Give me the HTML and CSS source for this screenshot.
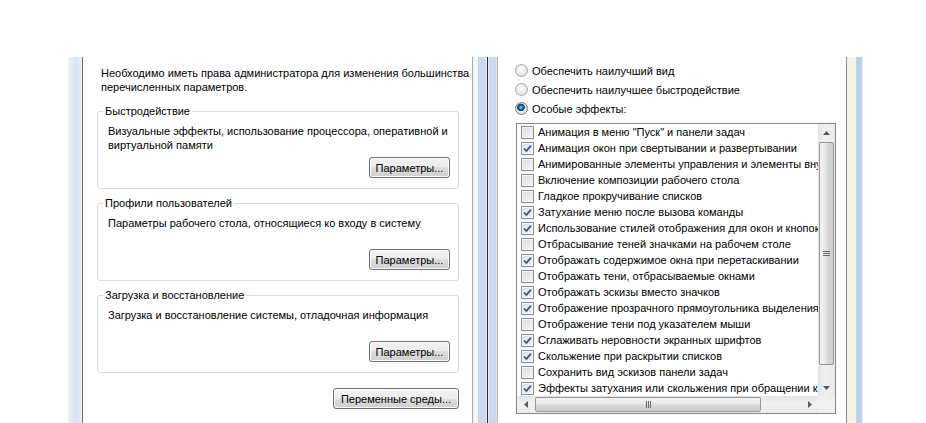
FILE: index.html
```html
<!DOCTYPE html>
<html lang="ru">
<head>
    <meta charset="UTF-8">
    <meta name="viewport" content="width=device-width, initial-scale=1.0">
    <title>Параметры быстродействия</title>
    <link rel="stylesheet" href="styles.css">
</head>
<body>
    <div class="desk">
        <div class="strip-l"></div>

        <section class="panel panel-l">
            <p class="intro">Необходимо иметь права администратора для изменения большинства<br>перечисленных параметров.</p>

            <fieldset class="group">
                <legend>Быстродействие</legend>
                <p class="group-text">Визуальные эффекты, использование процессора, оперативной и<br>виртуальной памяти</p>
                <div class="actions"><button class="btn">Параметры...</button></div>
            </fieldset>

            <fieldset class="group">
                <legend>Профили пользователей</legend>
                <p class="group-text">Параметры рабочего стола, относящиеся ко входу в систему</p>
                <div class="actions"><button class="btn">Параметры...</button></div>
            </fieldset>

            <fieldset class="group">
                <legend>Загрузка и восстановление</legend>
                <p class="group-text">Загрузка и восстановление системы, отладочная информация</p>
                <div class="actions"><button class="btn">Параметры...</button></div>
            </fieldset>

            <div class="actions env"><button class="btn btn-wide">Переменные среды...</button></div>
        </section>

        <div class="gutter"></div>

        <section class="panel panel-r">
            <div class="option"><span class="radio"></span>Обеспечить наилучший вид</div>
            <div class="option"><span class="radio"></span>Обеспечить наилучшее быстродействие</div>
            <div class="option"><span class="radio checked"></span>Особые эффекты:</div>

            <div class="list">
                <ul class="items">
                    <li><span class="cb"></span>Анимация в меню "Пуск" и панели задач</li>
                    <li><span class="cb on"><svg viewBox="0 0 11 11"><path d="M2 5.5 L4.4 8 L9 2.6"/></svg></span>Анимация окон при свертывании и развертывании</li>
                    <li><span class="cb"></span>Анимированные элементы управления и элементы внутри окна</li>
                    <li><span class="cb"></span>Включение композиции рабочего стола</li>
                    <li><span class="cb"></span>Гладкое прокручивание списков</li>
                    <li><span class="cb on"><svg viewBox="0 0 11 11"><path d="M2 5.5 L4.4 8 L9 2.6"/></svg></span>Затухание меню после вызова команды</li>
                    <li><span class="cb on"><svg viewBox="0 0 11 11"><path d="M2 5.5 L4.4 8 L9 2.6"/></svg></span>Использование стилей отображения для окон и кнопок</li>
                    <li><span class="cb"></span>Отбрасывание теней значками на рабочем столе</li>
                    <li><span class="cb on"><svg viewBox="0 0 11 11"><path d="M2 5.5 L4.4 8 L9 2.6"/></svg></span>Отображать содержимое окна при перетаскивании</li>
                    <li><span class="cb"></span>Отображать тени, отбрасываемые окнами</li>
                    <li><span class="cb on"><svg viewBox="0 0 11 11"><path d="M2 5.5 L4.4 8 L9 2.6"/></svg></span>Отображать эскизы вместо значков</li>
                    <li><span class="cb on"><svg viewBox="0 0 11 11"><path d="M2 5.5 L4.4 8 L9 2.6"/></svg></span>Отображение прозрачного прямоугольника выделения</li>
                    <li><span class="cb"></span>Отображение тени под указателем мыши</li>
                    <li><span class="cb on"><svg viewBox="0 0 11 11"><path d="M2 5.5 L4.4 8 L9 2.6"/></svg></span>Сглаживать неровности экранных шрифтов</li>
                    <li><span class="cb on"><svg viewBox="0 0 11 11"><path d="M2 5.5 L4.4 8 L9 2.6"/></svg></span>Скольжение при раскрытии списков</li>
                    <li><span class="cb"></span>Сохранить вид эскизов панели задач</li>
                    <li><span class="cb on"><svg viewBox="0 0 11 11"><path d="M2 5.5 L4.4 8 L9 2.6"/></svg></span>Эффекты затухания или скольжения при обращении к элементам управления</li>
                </ul>

                <div class="vscroll">
                    <div class="arrow"><svg width="7" height="4" viewBox="0 0 7 4"><path d="M0 4 L3.5 0 L7 4 Z"/></svg></div>
                    <div class="thumb thumb-v"><svg width="7" height="5" viewBox="0 0 7 5"><path d="M0 0.5 H7 M0 2.5 H7 M0 4.5 H7"/></svg></div>
                    <div class="track"></div>
                    <div class="arrow"><svg width="7" height="4" viewBox="0 0 7 4"><path d="M0 0 L3.5 4 L7 0 Z"/></svg></div>
                </div>

                <div class="hscroll">
                    <div class="arrow"><svg width="4" height="7" viewBox="0 0 4 7"><path d="M4 0 L0 3.5 L4 7 Z"/></svg></div>
                    <div class="thumb thumb-h"><svg width="5" height="7" viewBox="0 0 5 7"><path d="M0.5 0 V7 M2.5 0 V7 M4.5 0 V7"/></svg></div>
                    <div class="track"></div>
                    <div class="arrow"><svg width="4" height="7" viewBox="0 0 4 7"><path d="M0 0 L4 3.5 L0 7 Z"/></svg></div>
                </div>

                <div class="corner"></div>
            </div>
        </section>

        <div class="strip-r"></div>
    </div>
</body>
</html>
```

FILE: styles.css
```css
html, body {
    margin: 0;
    background-color: #fff;
}

body {
    font-family: "Liberation Sans", Arial, sans-serif;
    font-size: 11px;
    line-height: 14px;
    color: #000;
    width: 926px;
    height: 423px;
    overflow: hidden;
}

.desk {
    display: flex;
    margin-top: 57px;
    height: 366px;
    padding-left: 68px;
}

.strip-l {
    width: 14px;
    background: linear-gradient(to right, #eef3f9, #d8e4f1 55%, #e9f0f8);
}

.panel {
    box-sizing: border-box;
    height: 100%;
    background-color: #fff;
}

/* left: system properties tab */
.panel-l {
    width: 391px;
    border-left: 1px solid #6e6e6e;
    border-right: 1px solid #a9a9a9;
    padding: 9px 13px 0 14px;
}

.intro {
    margin: 0 0 10px 4px;
    white-space: nowrap;
}

.group {
    margin: 0 0 7px 0;
    padding: 6px 8px 10px 10px;
    border: 1px solid #d9dde1;
    border-radius: 3px;
    min-width: 0;
}

.group legend {
    margin-left: -5px;
    padding: 0 2px;
    line-height: 14px;
}

.group-text {
    margin: 0;
    min-height: 28px;
    white-space: nowrap;
}

.actions {
    display: flex;
    justify-content: flex-end;
    margin-top: 5px;
}

.actions.env {
    margin-top: 15px;
}

.btn {
    box-sizing: border-box;
    width: 81px;
    height: 21px;
    padding: 0;
    font: inherit;
    color: #000;
    white-space: nowrap;
    border: 1px solid #707070;
    border-radius: 3px;
    background: linear-gradient(#f2f2f2 0%, #ebebeb 50%, #dddddd 50%, #cfcfcf 100%);
    box-shadow: inset 0 0 0 1px #fbfbfb;
}

.btn-wide {
    width: 126px;
}

.gutter {
    width: 24px;
    background: linear-gradient(to right,
        #f3f6fa 0, #f3f6fa 5px,
        #c9daee 5px, #c9daee 13px,
        #e6eef7 13px, #e6eef7 14px,
        #262626 14px, #262626 15px,
        #e6eef7 15px, #e6eef7 16px,
        #c9daee 16px, #c9daee 23px,
        #e6e6e6 23px);
}

/* right: visual effects tab */
.panel-r {
    width: 350px;
    border-left: 1px solid #b4b4b4;
    border-right: 1px solid #8c8c8c;
    padding: 4px 0 0 17px;
}

.option {
    display: flex;
    align-items: center;
    gap: 4px;
    height: 19px;
    white-space: nowrap;
}

.radio {
    box-sizing: border-box;
    width: 13px;
    height: 13px;
    border-radius: 50%;
    border: 1px solid #a4a4a4;
    background: radial-gradient(circle at 45% 40%, #ffffff 0, #f0f0f0 40%, #d4d4d4 100%);
}

.radio.checked {
    border-color: #6f7d8c;
    background:
        radial-gradient(circle at 45% 40%, #a8dcf8 0, #2b7bc0 1.6px, #144d86 3px, #0d3a68 3.6px, transparent 4.1px),
        radial-gradient(circle at 45% 40%, #ffffff 0, #eeeeee 40%, #d0d0d0 100%);
}

.list {
    box-sizing: border-box;
    width: 320px;
    height: 291px;
    margin: 5px 0 0 1px;
    border: 1px solid #828790;
    display: grid;
    grid-template-columns: 301px 17px;
    grid-template-rows: 272px 17px;
}

.items {
    list-style: none;
    margin: 0;
    padding: 0;
    overflow: hidden;
    white-space: nowrap;
}

.items li {
    display: flex;
    align-items: center;
    gap: 4px;
    height: 16px;
    padding-left: 4px;
}

.cb {
    box-sizing: border-box;
    flex: none;
    width: 13px;
    height: 13px;
    border: 1px solid #8e8f8f;
    background: linear-gradient(135deg, #dcdde0, #f6f6f6);
    box-shadow: inset 0 0 0 1px #f4f4f4;
}

.cb svg {
    display: block;
    width: 11px;
    height: 11px;
    fill: none;
    stroke: #3d4f8f;
    stroke-width: 1.7;
}

.vscroll,
.hscroll {
    display: flex;
}

.vscroll {
    flex-direction: column;
    background: linear-gradient(to right, #e3e3e3, #f1f1f1 40%, #eaeaea);
}

.hscroll {
    background: linear-gradient(#e3e3e3, #f1f1f1 40%, #eaeaea);
}

.arrow {
    flex: none;
    width: 17px;
    height: 17px;
    display: flex;
    align-items: center;
    justify-content: center;
}

.arrow svg {
    fill: #5b5b5b;
}

.thumb {
    box-sizing: border-box;
    flex: none;
    display: flex;
    align-items: center;
    justify-content: center;
    border: 1px solid #979797;
    border-radius: 2px;
}

.thumb svg {
    fill: none;
    stroke: #6a6a6a;
    stroke-width: 1;
}

.thumb-v {
    width: 15px;
    height: 223px;
    margin: 1px 1px 0;
    background: linear-gradient(to right, #f4f4f4, #e8e8e8 45%, #d8d8d8 55%, #cdcdcd);
}

.thumb-h {
    width: 226px;
    height: 15px;
    margin: 1px 0 0 1px;
    background: linear-gradient(#f4f4f4, #e8e8e8 45%, #d8d8d8 55%, #cdcdcd);
}

.track {
    flex: 1;
}

.corner {
    background-color: #f0f0f0;
}

.strip-r {
    width: 16px;
    background: linear-gradient(to right,
        #f5f2ea 0, #f5f2ea 9px,
        #bdd2ea 9px, #bdd2ea 15px,
        #e3ecf6 15px);
}
```
